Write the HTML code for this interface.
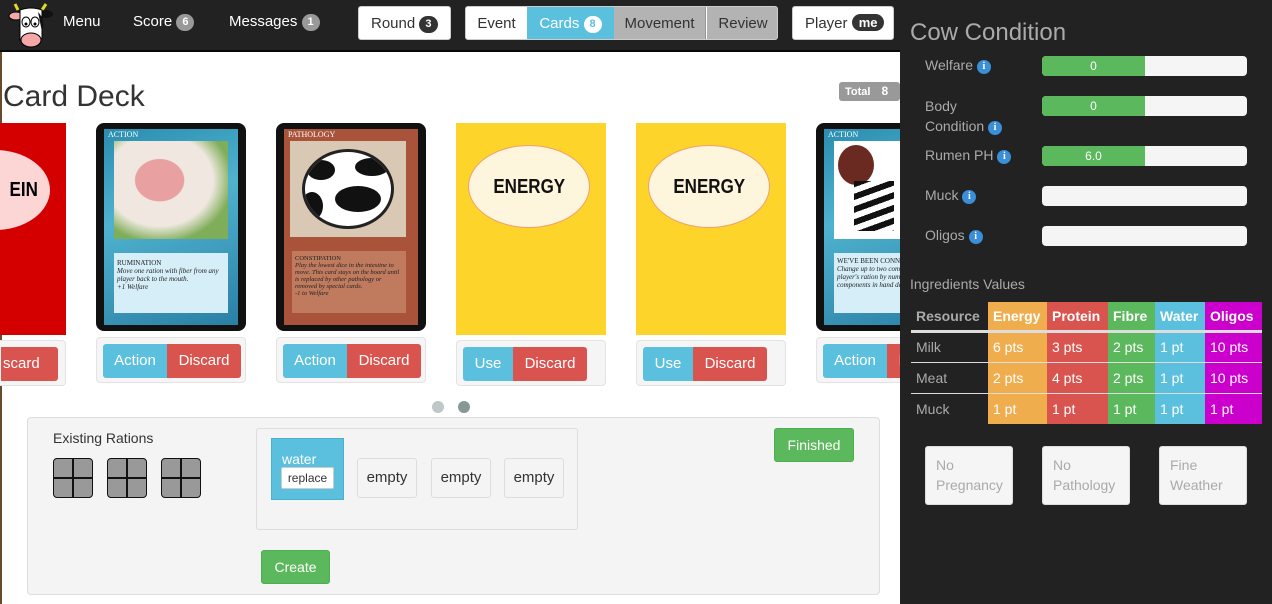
<!DOCTYPE html>
<html><head><style>
*{box-sizing:border-box;margin:0;padding:0}
body{width:1272px;height:604px;overflow:hidden;background:#fff;font-family:"Liberation Sans",sans-serif;position:relative}
.abs{position:absolute}
.nav{left:0;top:0;width:900px;height:52px;background:#222;border-bottom:2px solid #080808}
.nt{color:#fff;font-size:15px;top:13px}
.badge{display:inline-block;background:#999;color:#fff;border-radius:9px;font-size:11px;font-weight:bold;padding:0 6px;line-height:17px;height:17px;vertical-align:1px}
.wbtn{background:#fff;border:1px solid #ccc;border-radius:3px;height:34px;top:6px;font-size:15px;color:#333;line-height:32px}
.wbtn span.abs{line-height:35px}
.side{left:900px;top:0;width:372px;height:604px;background:#222}
.lbl{color:#aaa;font-size:14px;left:925px}
.info{display:inline-block;width:14px;height:14px;border-radius:50%;background:#3a8fd8;color:#fff;font-size:10px;font-weight:bold;text-align:center;line-height:14px;font-family:"Liberation Serif",serif;vertical-align:1px}
.bar{left:1042px;width:205px;height:20px;background:#f5f5f5;border-radius:4px;overflow:hidden}
.bar div{width:103px;height:20px;background:#5cb85c;color:#fff;font-size:12px;text-align:center;line-height:20px}
.card{top:123px;width:150px;height:208px;border-radius:8px;background:#111}
.yel{top:123px;width:150px;height:212px;background:#fdd42a}
.oval{position:absolute;left:12px;top:22px;width:122px;height:83px;border-radius:50%;background:#fdf5dc;border:1px solid #f0a070;text-align:center;line-height:83px;font-weight:bold;font-size:20px;color:#111}
.oval span{display:inline-block;transform:scaleX(0.85)}
.bp{height:46px;background:#f5f5f5;border:1px solid #e3e3e3;border-radius:4px;width:150px}
.b{position:absolute;height:34px;line-height:34px;color:#fff;font-size:15px;text-align:center}
.info-b{background:#5bc0de;border-radius:3px 0 0 3px}
.dan-b{background:#d9534f;border-radius:0 3px 3px 0}
.sq{width:40px;height:40px;border:1.5px solid #111;border-radius:4px;background:#999;top:458px}
.sq:before{content:"";position:absolute;left:18px;top:0;width:2px;height:100%;background:#111}
.sq:after{content:"";position:absolute;top:18px;left:0;height:2px;width:100%;background:#111}
.emp{top:458px;width:60px;height:40px;border:1px solid #ddd;border-radius:3px;background:#f4f4f4;text-align:center;line-height:38px;font-size:15px;color:#333}
table{border-collapse:collapse;position:absolute;left:911px;top:302px;font-size:14px;color:#fff}
td,th{padding:0 5px;text-align:left;height:31px}
th{font-weight:bold;height:29px;font-size:14px;border-bottom:3px solid #ddd}
tr.r td{border-top:1px solid #ddd}
.st{width:88px;height:59px;top:446px;background:#f5f5f5;border:1px solid #ddd;border-radius:3px;color:#aaa;font-size:14px;line-height:20px;padding:8px 10px}
</style></head><body>
<div class="abs" style="left:0;top:0;width:2px;height:604px;background:#6b4a2b"></div>
<div class="abs nav"></div>
<svg class="abs" style="left:8px;top:2px" width="46" height="48" viewBox="0 0 46 48">
<path d="M10 8 L7 2 M34 8 L38 2" stroke="#dd2" stroke-width="3"/>
<ellipse cx="8" cy="14" rx="7" ry="4" fill="#f4a8a8" stroke="#000"/>
<ellipse cx="38" cy="12" rx="7" ry="4" fill="#111"/>
<path d="M12 8 Q23 4 34 8 L34 36 Q23 46 12 38 Z" fill="#fff" stroke="#000"/>
<path d="M30 10 Q38 18 34 30 Z" fill="#111"/>
<ellipse cx="18" cy="20" rx="4" ry="5" fill="#fff" stroke="#000"/><ellipse cx="27" cy="20" rx="4" ry="5" fill="#fff" stroke="#000"/>
<circle cx="18" cy="22" r="1.5"/><circle cx="27" cy="22" r="1.5"/>
<ellipse cx="23" cy="38" rx="10" ry="7" fill="#f4a8a8" stroke="#000"/>
</svg>
<div class="abs nt" style="left:63px">Menu</div>
<div class="abs nt" style="left:133px">Score <span class="badge">6</span></div>
<div class="abs nt" style="left:229px">Messages <span class="badge">1</span></div>
<div class="abs wbtn" style="left:358px;width:93px;padding-left:12px;line-height:33px">Round <span class="badge" style="background:#333">3</span></div>
<div class="abs wbtn" style="left:465px;width:313px;overflow:hidden">
<span class="abs" style="left:0;width:61px;text-align:center;top:-1px">Event</span>
<span class="abs" style="left:61px;width:87px;height:34px;top:-1px;background:#5bc0de;color:#fff;text-align:center">Cards <span class="badge" style="background:#fff;color:#5bc0de">8</span></span>
<span class="abs" style="left:148px;width:92px;height:34px;top:-1px;background:#b3b3b3;text-align:center;border-right:1px solid #999">Movement</span>
<span class="abs" style="left:241px;width:72px;height:34px;top:-1px;background:#b3b3b3;text-align:center">Review</span>
</div>
<div class="abs wbtn" style="left:792px;width:102px;padding-left:12px;line-height:33px">Player <span class="badge" style="background:#333;font-size:13px;padding:0 7px">me</span></div>

<div class="abs" style="left:3px;top:80px;font-size:30px;color:#333">Card Deck</div>
<div class="abs" style="left:839px;top:82px;width:61px;height:19px;background:#999;border-radius:3px;color:#fff;font-size:11px;font-weight:bold;line-height:19px;padding-left:6px">Total <span style="margin-left:8px;font-size:12px">8</span></div>

<div class="abs" style="left:0;top:123px;width:66px;height:212px;background:#d40000;overflow:hidden">
<div class="abs" style="left:-60px;top:27px;width:110px;height:80px;border-radius:50%;background:#fcd5d5;text-align:right;padding-right:10px;line-height:80px;font-weight:bold;font-size:20px"><span style="display:inline-block;transform:scaleX(0.85)">EIN</span></div></div>
<div class="abs bp" style="left:-84px;top:340px"><div class="b dan-b" style="left:84px;width:57px;top:6px;text-align:left;padding-left:2px">scard</div></div>

<div class="abs card" style="left:96px">
<div class="abs" style="left:8px;top:6px;width:134px;height:196px;background:linear-gradient(160deg,#2a8db0,#4fb3cf 40%,#2a7fa5)"></div>
<div class="abs" style="left:12px;top:7px;color:#fff;font-size:8px;font-family:'Liberation Serif',serif">ACTION</div>
<div class="abs" style="left:18px;top:18px;width:114px;height:98px;background:radial-gradient(ellipse at 40% 40%,#e9a0a0 0 25%,#f0e8e0 26% 55%,#7fae5a 75%)"></div>
<div class="abs" style="left:18px;top:130px;width:114px;height:60px;background:#d6eef8;font-family:'Liberation Serif',serif;font-size:7px;padding:6px 3px;color:#222">RUMINATION<br><i>Move one ration with fiber from any player back to the mouth.<br>+1 Welfare</i></div>
</div>
<div class="abs bp" style="left:96px;top:337px"><div class="b info-b" style="left:6px;top:6px;width:64px">Action</div><div class="b dan-b" style="left:70px;top:6px;width:74px">Discard</div></div>

<div class="abs card" style="left:276px">
<div class="abs" style="left:8px;top:6px;width:134px;height:196px;background:#a9533a"></div>
<div class="abs" style="left:12px;top:7px;color:#fff;font-size:8px;font-family:'Liberation Serif',serif">PATHOLOGY</div>
<div class="abs" style="left:14px;top:18px;width:116px;height:96px;background:#d8c8b4"></div>
<div class="abs" style="left:26px;top:26px;width:92px;height:80px;border-radius:50%;background:#fff;border:3px solid #222;overflow:hidden">
<div class="abs" style="left:2px;top:8px;width:28px;height:20px;background:#111;border-radius:50%"></div>
<div class="abs" style="left:50px;top:6px;width:34px;height:18px;background:#111;border-radius:50%"></div>
<div class="abs" style="left:30px;top:34px;width:46px;height:26px;background:#111;border-radius:50%"></div>
<div class="abs" style="left:-4px;top:40px;width:22px;height:28px;background:#111;border-radius:50%"></div></div>
<div class="abs" style="left:16px;top:128px;width:114px;height:62px;background:#c07a5e;font-family:'Liberation Serif',serif;font-size:6.5px;padding:4px 3px;color:#222">CONSTIPATION<br><i>Play the lowest dice in the intestine to move. This card stays on the board until is replaced by other pathology or removed by special cards.<br>-1 to Welfare</i></div>
</div>
<div class="abs bp" style="left:276px;top:337px"><div class="b info-b" style="left:6px;top:6px;width:64px">Action</div><div class="b dan-b" style="left:70px;top:6px;width:74px">Discard</div></div>

<div class="abs yel" style="left:456px"><div class="oval"><span>ENERGY</span></div></div>
<div class="abs bp" style="left:456px;top:340px"><div class="b info-b" style="left:6px;top:6px;width:50px">Use</div><div class="b dan-b" style="left:56px;top:6px;width:74px">Discard</div></div>
<div class="abs yel" style="left:636px"><div class="oval"><span>ENERGY</span></div></div>
<div class="abs bp" style="left:636px;top:340px"><div class="b info-b" style="left:6px;top:6px;width:50px">Use</div><div class="b dan-b" style="left:56px;top:6px;width:74px">Discard</div></div>

<div class="abs card" style="left:816px;width:150px">
<div class="abs" style="left:8px;top:6px;width:134px;height:196px;background:linear-gradient(160deg,#2a8db0,#4fb3cf 40%,#2a7fa5)"></div>
<div class="abs" style="left:12px;top:7px;color:#fff;font-size:8px;font-family:'Liberation Serif',serif">ACTION</div>
<div class="abs" style="left:18px;top:18px;width:114px;height:98px;background:#fff"><div class="abs" style="left:4px;top:4px;width:36px;height:40px;border-radius:50%;background:#6a2a22"></div><div class="abs" style="left:20px;top:40px;width:40px;height:50px;background:repeating-linear-gradient(160deg,#111 0 6px,#fff 6px 12px)"></div></div>
<div class="abs" style="left:18px;top:130px;width:114px;height:60px;background:#d6eef8;font-family:'Liberation Serif',serif;font-size:7px;padding:4px 3px;color:#222">WE'VE BEEN CONNED<br><i>Change up to two components of any player's ration by numbers of components in hand deck</i></div>
</div>
<div class="abs bp" style="left:816px;top:337px;width:150px"><div class="b info-b" style="left:6px;top:6px;width:64px">Action</div><div class="b dan-b" style="left:70px;top:6px;width:74px">Discard</div></div>

<div class="abs" style="left:432px;top:401px;width:12px;height:12px;border-radius:50%;background:#bfc8c8"></div>
<div class="abs" style="left:458px;top:401px;width:12px;height:12px;border-radius:50%;background:#869999"></div>

<div class="abs" style="left:27px;top:417px;width:853px;height:178px;background:#f4f4f4;border:1px solid #ddd;border-radius:4px"></div>
<div class="abs" style="left:53px;top:430px;font-size:14px;color:#333">Existing Rations</div>
<div class="abs sq" style="left:53px"></div><div class="abs sq" style="left:107px"></div><div class="abs sq" style="left:161px"></div>
<div class="abs" style="left:256px;top:428px;width:322px;height:102px;border:1px solid #ddd;border-radius:3px;background:#f4f4f4"></div>
<div class="abs" style="left:271px;top:438px;width:73px;height:62px;background:#5bc0de;border:1px solid #4ab0cf;color:#fff;font-size:14px;padding:12px 0 0 10px">water</div>
<div class="abs" style="left:281px;top:467px;width:53px;height:22px;background:#fff;border:1px solid #ccc;border-radius:2px;font-size:12px;color:#333;text-align:center;line-height:20px">replace</div>
<div class="abs emp" style="left:357px">empty</div>
<div class="abs emp" style="left:431px">empty</div>
<div class="abs emp" style="left:504px">empty</div>
<div class="abs" style="left:261px;top:550px;width:69px;height:34px;background:#5cb85c;border:1px solid #4cae4c;border-radius:3px;color:#fff;font-size:14px;text-align:center;line-height:32px">Create</div>
<div class="abs" style="left:774px;top:428px;width:80px;height:34px;background:#5cb85c;border:1px solid #4cae4c;border-radius:3px;color:#fff;font-size:14px;text-align:center;line-height:32px">Finished</div>

<div class="abs side"></div>
<div class="abs" style="left:910px;top:19px;font-size:24px;color:#aaa">Cow Condition</div>
<div class="abs lbl" style="top:57px">Welfare <span class="info">i</span></div>
<div class="abs bar" style="top:56px"><div>0</div></div>
<div class="abs lbl" style="top:96px;line-height:20px">Body<br>Condition <span class="info">i</span></div>
<div class="abs bar" style="top:96px"><div>0</div></div>
<div class="abs lbl" style="top:147px">Rumen PH <span class="info">i</span></div>
<div class="abs bar" style="top:146px"><div>6.0</div></div>
<div class="abs lbl" style="top:187px">Muck <span class="info">i</span></div>
<div class="abs bar" style="top:186px"></div>
<div class="abs lbl" style="top:227px">Oligos <span class="info">i</span></div>
<div class="abs bar" style="top:226px"></div>
<div class="abs" style="left:910px;top:276px;font-size:14px;color:#aaa">Ingredients Values</div>
<table>
<tr><th style="width:77px;color:#aaa">Resource</th><th style="width:59px;background:#f0ad4e">Energy</th><th style="width:61px;background:#d9534f">Protein</th><th style="width:47px;background:#5cb85c">Fibre</th><th style="width:50px;background:#5bc0de">Water</th><th style="width:57px;background:#cc00cc">Oligos</th></tr>
<tr><td style="color:#aaa">Milk</td><td style="background:#f0ad4e">6 pts</td><td style="background:#d9534f">3 pts</td><td style="background:#5cb85c">2 pts</td><td style="background:#5bc0de">1 pt</td><td style="background:#cc00cc">10 pts</td></tr>
<tr class="r"><td style="color:#aaa">Meat</td><td style="background:#f0ad4e">2 pts</td><td style="background:#d9534f">4 pts</td><td style="background:#5cb85c">2 pts</td><td style="background:#5bc0de">1 pt</td><td style="background:#cc00cc">10 pts</td></tr>
<tr class="r"><td style="color:#aaa">Muck</td><td style="background:#f0ad4e">1 pt</td><td style="background:#d9534f">1 pt</td><td style="background:#5cb85c">1 pt</td><td style="background:#5bc0de">1 pt</td><td style="background:#cc00cc">1 pt</td></tr>
</table>
<div class="abs st" style="left:925px">No<br>Pregnancy</div>
<div class="abs st" style="left:1042px">No<br>Pathology</div>
<div class="abs st" style="left:1159px">Fine<br>Weather</div>
</body></html>
